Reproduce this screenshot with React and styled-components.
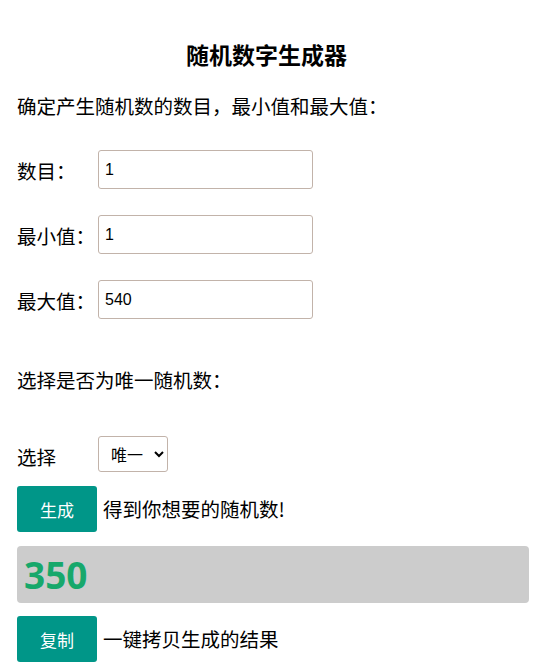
import React, { useState } from 'react'
import { styled, createGlobalStyle } from 'styled-components'

const GlobalStyle = createGlobalStyle`
    body {
        margin: 0;
        background: #fff;
        font-family: "Noto Sans CJK SC", "Liberation Sans", sans-serif;
        color: #000;
    }
`
const Page = styled.div`
    width: 540px;
    padding: 40px 11px 0 17px;
    box-sizing: border-box;
`
const Title = styled.h1`
    margin: 0;
    padding-right: 13px;
    font-size: 23px;
    line-height: 28px;
    font-weight: bold;
    text-align: center;
`
const Intro = styled.p`
    margin: ${(props) => props.$top || "25px"} 0 0;
    font-size: 19.5px;
    line-height: 26px;
`
const FieldRow = styled.div`
    display: flex;
    align-items: center;
    margin-top: ${(props) => props.$top || "26px"};
`
const Label = styled.label`
    width: 81px;
    font-size: 19.5px;
    line-height: 26px;
    padding-top: ${(props) => props.$drop ? "6px" : "2px"};
`
const NumberInput = styled.input`
    width: 215px;
    height: 39px;
    box-sizing: border-box;
    border: 1px solid #c2b3aa;
    border-radius: 3px;
    padding: 0 6px;
    font-family: "Liberation Sans", Arial, sans-serif;
    font-size: 16px;
    color: #000;
    outline: none;
`
const Select = styled.select`
    width: 70px;
    height: 36px;
    box-sizing: border-box;
    border: 1px solid #c2b3aa;
    border-radius: 3px;
    background: #fff;
    font-family: "Noto Sans CJK SC", sans-serif;
    font-size: 16px;
    padding: 0 2px 0 8px;
    color: #000;
`
const ActionRow = styled.div`
    display: flex;
    align-items: center;
    gap: 6px;
    margin-top: ${(props) => props.$top || "14px"};
`
const Button = styled.button`
    width: 80px;
    height: 46px;
    border: none;
    border-radius: 3px;
    background: #009688;
    color: #fff;
    font-family: "Noto Sans CJK SC", sans-serif;
    font-size: 17px;
    cursor: pointer;
`
const Hint = styled.span`
    font-size: 19.5px;
    line-height: 26px;
`
const Result = styled.div`
    margin-top: 14px;
    height: 57px;
    border-radius: 4px;
    background: #cccccc;
    display: flex;
    align-items: center;
    padding-left: 7px;
    font-family: "Open Sans", "Noto Sans", sans-serif;
    font-weight: bold;
    font-size: 37px;
    color: #17a86b;
`

export default function App() {
  const [count, setCount] = useState('1')
  const [min, setMin] = useState('1')
  const [max, setMax] = useState('540')
  const [result, setResult] = useState('350')

  const generate = () => {
    const lo = parseInt(min, 10) || 0
    const hi = parseInt(max, 10) || 0
    const n = Math.max(1, parseInt(count, 10) || 1)
    const out = []
    for (let i = 0; i < n; i++) out.push(lo + Math.floor(Math.random() * (hi - lo + 1)))
    setResult(out.join(', '))
  }

  return (
    <Page>
      <GlobalStyle />
      <Title>随机数字生成器</Title>
      <Intro>确定产生随机数的数目，最小值和最大值：</Intro>
      <FieldRow $top="31px">
        <Label>数目：</Label>
        <NumberInput value={count} onChange={(e) => setCount(e.target.value)} />
      </FieldRow>
      <FieldRow>
        <Label>最小值：</Label>
        <NumberInput value={min} onChange={(e) => setMin(e.target.value)} />
      </FieldRow>
      <FieldRow>
        <Label>最大值：</Label>
        <NumberInput value={max} onChange={(e) => setMax(e.target.value)} />
      </FieldRow>
      <Intro $top="48px">选择是否为唯一随机数：</Intro>
      <FieldRow $top="43px">
        <Label $drop>选择</Label>
        <Select defaultValue="unique">
          <option value="unique">唯一</option>
          <option value="repeat">重复</option>
        </Select>
      </FieldRow>
      <ActionRow>
        <Button onClick={generate}>生成</Button>
        <Hint>得到你想要的随机数!</Hint>
      </ActionRow>
      <Result>{result}</Result>
      <ActionRow $top="13px">
        <Button>复制</Button>
        <Hint>一键拷贝生成的结果</Hint>
      </ActionRow>
    </Page>
  )
}
